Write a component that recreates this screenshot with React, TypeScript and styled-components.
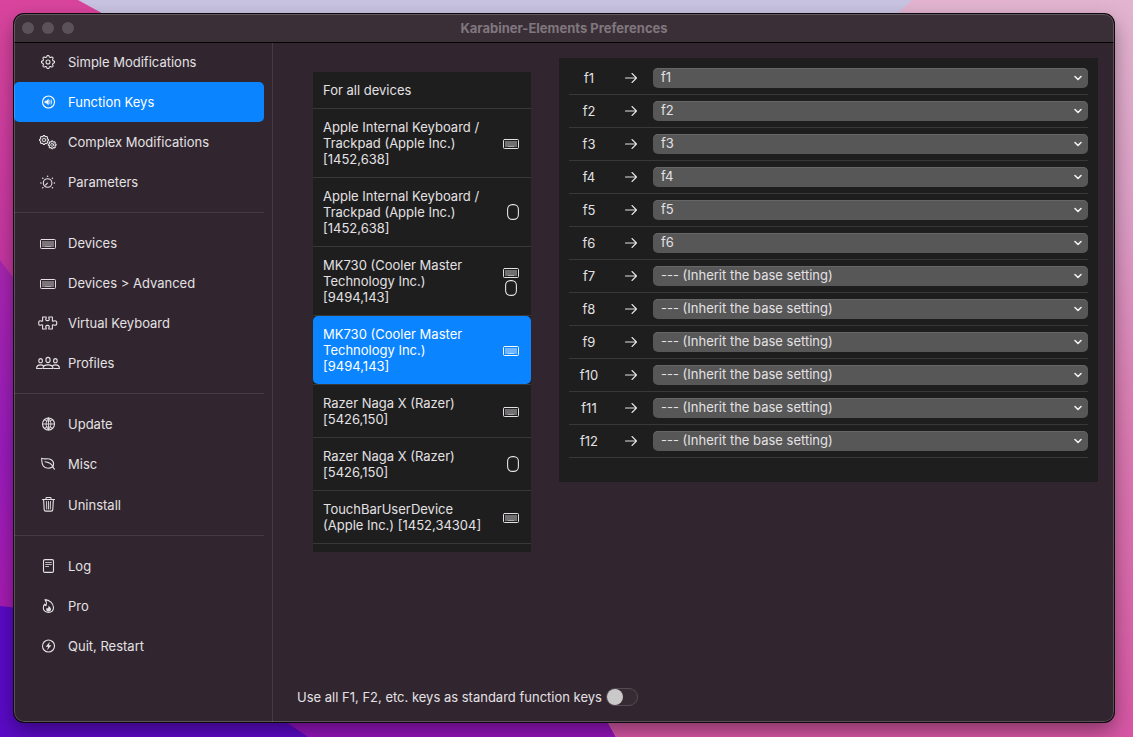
import React, { useState } from "react";
import styled, { createGlobalStyle, css } from "styled-components";

const GlobalStyle = createGlobalStyle`
  *, *::before, *::after { box-sizing: border-box; }
  body {
    margin: 0;
    background: #4a08b0;
    color: #e4e1e4;
    font-family: Inter, "Liberation Sans", sans-serif;
    font-size: 13px;
    line-height: 16px;
  }
  button, select, input { font: inherit; color: inherit; margin: 0; }
`;

/* ---------- layout ---------- */

const Desktop = styled.div`
  position: relative;
  display: flex;
  min-height: 100vh;
  padding: 14px 19px 15px 14px;
`;

const WallpaperSvg = styled.svg`
  position: absolute;
  inset: 0;
  width: 100%;
  height: 100%;
`;

const Window = styled.div`
  position: relative;
  flex: 1;
  display: flex;
  flex-direction: column;
  border-radius: 10px;
  background: #31262f;
  box-shadow: 0 0 0 1px #0d080c, 0 8px 20px rgba(0, 0, 0, 0.4);
  overflow: hidden;

  &::after {
    content: "";
    position: absolute;
    inset: 0;
    border: 1px solid rgba(255, 255, 255, 0.2);
    border-radius: inherit;
    pointer-events: none;
  }
`;

const TitleBar = styled.header`
  position: relative;
  display: grid;
  grid-template-columns: 1fr auto 1fr;
  align-items: center;
  height: 28px;
  padding: 0 8px;
  background: #3a2f37;
  box-shadow: 0 1px 0 #000;
`;

const Lights = styled.div`
  display: flex;
  gap: 8px;
`;

const Light = styled.button`
  width: 12px;
  height: 12px;
  padding: 0;
  border: 0;
  border-radius: 50%;
  background: #5b5159;
`;

const Title = styled.h1`
  margin: 0;
  font-size: 13px;
  line-height: 16px;
  font-weight: 700;
  color: #80777e;
`;

const Body = styled.div`
  flex: 1;
  display: flex;
`;

const Sidebar = styled.nav`
  flex: none;
  width: 259px;
  padding-right: 8px;
  border-right: 1px solid #453b43;
`;

const NavGroup = styled.div`
  & + & {
    margin-top: 10px;
    padding-top: 10px;
    border-top: 1px solid #453b43;
  }
`;

const NavItem = styled.button<{ $active?: boolean }>`
  display: flex;
  align-items: center;
  gap: 8px;
  width: 100%;
  padding: 10px 22px;
  border: 0;
  border-radius: 5px;
  background: ${(p) => (p.$active ? "#0a84ff" : "transparent")};
  color: ${(p) => (p.$active ? "#fff" : "inherit")};
  line-height: 20px;
  text-align: left;
`;

const IconSlot = styled.span`
  display: flex;
  justify-content: center;
  width: 24px;
`;

const Main = styled.main`
  flex: 1;
  display: flex;
  flex-direction: column;
  justify-content: space-between;
  padding: 16px 16px 16px 24px;
`;

const Panels = styled.div`
  display: flex;
  align-items: flex-start;
  gap: 28px;
  padding-left: 16px;
`;

const DeviceList = styled.ul`
  flex: none;
  width: 218px;
  margin: 14px 0 0;
  padding: 0 0 8px;
  list-style: none;
  background: #1e1e1e;
`;

const DeviceItem = styled.li`
  border-bottom: 1px solid #383838;
`;

const DeviceButton = styled.button<{ $active?: boolean }>`
  display: flex;
  align-items: center;
  justify-content: space-between;
  width: 100%;
  padding: 10px 12px 10px 10px;
  border: 0;
  background: transparent;
  text-align: left;
  ${(p) =>
    p.$active &&
    css`
      border-radius: 5px;
      background: #0a84ff;
      color: #fff;
    `}
`;

const DeviceName = styled.span`
  width: 168px;
`;

const DeviceIcons = styled.span`
  display: flex;
  flex-direction: column;
  align-items: center;
  gap: 2px;
`;

const KeyPanel = styled.section`
  flex: 1;
  padding: 10px 10px 24px;
  background: #1e1e1e;
`;

const KeyRow = styled.div`
  display: grid;
  grid-template-columns: 40px 44px 1fr;
  align-items: center;
  justify-items: center;
  padding-bottom: 6px;
  border-bottom: 1px solid #383838;

  & + & {
    padding-top: 6px;
  }
`;

const SelectBox = styled.span`
  display: grid;
  grid-template-columns: 1fr 20px;
  align-items: center;
  justify-items: center;
  width: 100%;
`;

const Select = styled.select`
  grid-area: 1 / 1 / 2 / 3;
  width: 100%;
  height: 20px;
  padding: 0 20px 2px 8px;
  border: 0;
  border-radius: 5px;
  appearance: none;
  background: #575757;
  box-shadow: inset 0 1px 0 #666;
`;

const SelectArrow = styled.svg`
  grid-area: 1 / 2 / 2 / 3;
  z-index: 1;
  pointer-events: none;
`;

const ToggleRow = styled.label`
  display: flex;
  align-items: center;
  align-self: flex-start;
  gap: 4px;
`;

const Toggle = styled.input`
  appearance: none;
  display: flex;
  width: 32px;
  height: 18px;
  border: 1px solid #554b53;
  border-radius: 9px;
  background: #362b33;

  &::before {
    content: "";
    width: 16px;
    height: 16px;
    border-radius: 50%;
    background: #cbc8ca;
  }

  &:checked {
    justify-content: flex-end;
    background: #0a84ff;
  }
`;

/* ---------- drawings ---------- */

function gear(cx: number, cy: number, r: number, depth: number, teeth: number) {
  const points: string[] = [];
  for (let i = 0; i < teeth * 12; i++) {
    const a = (i / (teeth * 12)) * Math.PI * 2;
    const wave = Math.max(-1, Math.min(1, Math.cos(a * teeth) * 1.8));
    const d = r + wave * depth;
    points.push(`${(cx + d * Math.sin(a)).toFixed(2)} ${(cy - d * Math.cos(a)).toFixed(2)}`);
  }
  return `M${points.join("L")}Z`;
}

const Glyph = ({ w, h, children }: { w: number; h: number; children: React.ReactNode }) => (
  <svg
    width={w}
    height={h}
    viewBox={`0 0 ${w} ${h}`}
    fill="none"
    stroke="currentColor"
    strokeWidth="1.1"
    strokeLinecap="round"
    strokeLinejoin="round"
    aria-hidden="true"
  >
    {children}
  </svg>
);

const GearIcon = () => (
  <Glyph w={14} h={14}>
    <path d={gear(7, 7, 5.8, 0.7, 8)} />
    <circle cx="7" cy="7" r="2" />
  </Glyph>
);

const SpeakerIcon = () => (
  <Glyph w={14} h={14}>
    <circle cx="7.5" cy="7" r="6" />
    <path d="M4.2 6h1.2l2-1.8v5.6l-2-1.8H4.2z" fill="currentColor" strokeWidth="0.5" />
    <path d="M8.8 5.6q.8 1.4 0 2.8M10.2 4.8q1.3 2.2 0 4.4" strokeWidth="0.8" />
  </Glyph>
);

const GearsIcon = () => (
  <Glyph w={18} h={16}>
    <path d={gear(5, 6, 4.1, 0.4, 8)} />
    <circle cx="5" cy="6" r="1.8" strokeWidth="0.9" />
    <circle cx="5" cy="6" r="0.5" fill="currentColor" stroke="none" />
    <path d={gear(13.2, 10.8, 3.5, 0.4, 8)} />
    <circle cx="13.2" cy="10.8" r="1.5" strokeWidth="0.9" />
    <circle cx="13.2" cy="10.8" r="0.5" fill="currentColor" stroke="none" />
  </Glyph>
);

const DialIcon = () => (
  <Glyph w={16} h={14}>
    <circle cx="7.6" cy="8" r="4.3" />
    <path d="M7.4 8.2L5.6 10" />
    <g fill="currentColor" stroke="none">
      <circle cx="7.6" cy="1.2" r="0.8" />
      <circle cx="2.8" cy="3.2" r="0.8" />
      <circle cx="12.4" cy="3.2" r="0.8" />
      <circle cx="0.9" cy="8" r="0.8" />
      <circle cx="14.4" cy="8" r="0.8" />
      <circle cx="2.8" cy="12.8" r="0.8" />
      <circle cx="12.4" cy="12.8" r="0.8" />
    </g>
  </Glyph>
);

const KeyboardIcon = () => (
  <Glyph w={16} h={12}>
    <rect x="0.5" y="2.5" width="15" height="9" rx="1" strokeWidth="1" />
    <rect x="2" y="4" width="12" height="6" fill="currentColor" stroke="none" opacity="0.42" />
    <path d="M5 9.5h6" strokeWidth="1" strokeLinecap="butt" opacity="0.5" />
  </Glyph>
);

const MouseIcon = () => (
  <Glyph w={12} h={16}>
    <rect x="0.6" y="0.6" width="10.8" height="14.8" rx="4.6" />
  </Glyph>
);

const PuzzleIcon = () => (
  <Glyph w={20} h={14}>
    <path d="M4.6 1H8.2V2.2C7.2 3 7.6 4.6 9.5 4.6S11.8 3 10.8 2.2V1H14.4V4.9C15.6 5.6 15.9 4.7 17 4.7C18.2 4.7 18.8 5.7 18.8 7S18.2 9.3 17 9.3C15.9 9.3 15.6 8.4 14.4 9.1V13H10.8V11.8C11.8 11 11.4 9.4 9.5 9.4S7.2 11 8.2 11.8V13H4.6V9.1C3.4 8.4 3.1 9.3 2 9.3C1 9.3 .7 8.3 .7 7S1 4.7 2 4.7C3.1 4.7 3.4 5.6 4.6 4.9Z" />
  </Glyph>
);

const PeopleIcon = () => (
  <Glyph w={24} h={14}>
    <ellipse cx="12" cy="4" rx="2.1" ry="2.6" />
    <ellipse cx="4.6" cy="4.7" rx="1.8" ry="2.1" />
    <ellipse cx="19.4" cy="4.7" rx="1.8" ry="2.1" />
    <path d="M7 12.5C7 10.2 9.2 8.9 12 8.9S17 10.2 17 12.5Z" />
    <path d="M6 12.5H.6C.6 10.2 2.2 8.9 4.6 8.9Q6.4 8.9 7.4 9.7M18 12.5H23.4C23.4 10.2 21.8 8.9 19.4 8.9Q17.6 8.9 16.6 9.7" />
  </Glyph>
);

const GlobeIcon = () => (
  <Glyph w={14} h={14}>
    <circle cx="7.5" cy="7" r="6" />
    <path
      d="M7.5 1v12M1.5 7h12M7.5 1C4.2 4 4.2 10 7.5 13M7.5 1C10.8 4 10.8 10 7.5 13M3.4 2.8Q7.5 5.6 11.6 2.8M3.4 11.2Q7.5 8.4 11.6 11.2"
      strokeWidth="0.9"
    />
  </Glyph>
);

const LeafIcon = () => (
  <Glyph w={14} h={14}>
    <path d="M.6 1.2C2.6 2.9 6.8.8 9.8 2.4C12.8 4 13 7 11.9 9.8C8 12 4.2 11.2 2.2 8.8C.5 6.6.9 3.4.6 1.2Z" />
    <path d="M4 4.8C7 5.5 9.5 5.6 11.3 8.5Q12 10.6 13.4 12.2" />
  </Glyph>
);

const TrashIcon = () => (
  <Glyph w={14} h={21}>
    <path d="M1.5 5.5h12M5 5.3V4.3Q5 3.5 5.8 3.5h3.4q.8 0 .8.8v1M2.6 5.6l.6 10q.1 1.5 1.5 1.5h5.6q1.4 0 1.5-1.5l.6-10" />
    <path d="M5.5 7.5l.2 7.5M7.5 7.5v7.5M9.5 7.5l-.2 7.5" strokeWidth="0.9" />
  </Glyph>
);

const DocIcon = () => (
  <Glyph w={14} h={14}>
    <rect x="2.5" y="0.6" width="10" height="12.8" rx="1.4" />
    <path d="M4.6 3.5h5.8M4.6 5.5h5.8M4.6 7.5h3" strokeWidth="0.8" />
  </Glyph>
);

const FlameIcon = () => (
  <Glyph w={14} h={14}>
    <path d="M4 .6C8.5.8 12.5 4.5 12.5 8.6C12.5 11.6 10.3 13.4 7.5 13.4S2.3 11.5 2.3 8.9C2.3 7.2 2.9 6 3.7 5.2C4 6 4.4 6.5 5 6.7C5.7 4.5 5.4 2.2 4 .6Z" />
    <path
      d="M7.8 6.5C8.2 7.8 10 8.5 10 10.2C10 11.6 9 12.4 7.6 12.4S5.2 11.6 5.2 10.4C5.2 9.7 5.5 9.2 5.9 8.8Q6.2 9.4 6.8 9.4C7.6 8.6 7.3 7.5 7.8 6.5Z"
      fill="currentColor"
      stroke="none"
    />
  </Glyph>
);

const BoltIcon = () => (
  <Glyph w={14} h={14}>
    <circle cx="7.5" cy="7" r="6" />
    <path d="M8.9 2.8L4.6 7.7h2.5L6.1 11.2l4.3-4.9H7.9z" fill="currentColor" stroke="none" />
  </Glyph>
);

const ArrowIcon = () => (
  <Glyph w={14} h={12}>
    <path d="M1.5 6h11M8 1.5L12.5 6 8 10.5" />
  </Glyph>
);

const Wallpaper = () => (
  <WallpaperSvg viewBox="0 0 1133 737" preserveAspectRatio="none" aria-hidden="true">
    <defs>
      <linearGradient id="magenta" x1="0" y1="0" x2="0" y2="1">
        <stop offset="0" stopColor="#d9459d" />
        <stop offset="1" stopColor="#c032a4" />
      </linearGradient>
      <linearGradient id="violet" x1="0" y1="0" x2="0" y2="1">
        <stop offset="0" stopColor="#a826b0" />
        <stop offset="0.5" stopColor="#9a1cbc" />
        <stop offset="1" stopColor="#a81cae" />
      </linearGradient>
      <linearGradient id="rose" x1="0" y1="0" x2="0" y2="1">
        <stop offset="0" stopColor="#e2b4d0" />
        <stop offset="0.3" stopColor="#dc9cc4" />
        <stop offset="0.6" stopColor="#da78b0" />
        <stop offset="1" stopColor="#d656a4" />
      </linearGradient>
    </defs>
    <rect width="1133" height="737" fill="#c8c3e0" />
    <path d="M0 0H78L160 45V340H0Z" fill="url(#magenta)" />
    <path d="M0 260L60 340V640H0Z" fill="url(#violet)" />
    <path d="M0 606Q160 620 310 737H0Z" fill="#5a0ac6" />
    <path d="M240 690L308 737H616L590 690Z" fill="#9414bc" />
    <path d="M912 0H1133V737H616L590 690L860 50Z" fill="url(#rose)" />
  </WallpaperSvg>
);

/* ---------- data ---------- */

const navGroups = [
  [
    { label: "Simple Modifications", Icon: GearIcon },
    { label: "Function Keys", Icon: SpeakerIcon },
    { label: "Complex Modifications", Icon: GearsIcon },
    { label: "Parameters", Icon: DialIcon },
  ],
  [
    { label: "Devices", Icon: KeyboardIcon },
    { label: "Devices > Advanced", Icon: KeyboardIcon },
    { label: "Virtual Keyboard", Icon: PuzzleIcon },
    { label: "Profiles", Icon: PeopleIcon },
  ],
  [
    { label: "Update", Icon: GlobeIcon },
    { label: "Misc", Icon: LeafIcon },
    { label: "Uninstall", Icon: TrashIcon },
  ],
  [
    { label: "Log", Icon: DocIcon },
    { label: "Pro", Icon: FlameIcon },
    { label: "Quit, Restart", Icon: BoltIcon },
  ],
];

const devices = [
  { name: "For all devices" },
  { name: "Apple Internal Keyboard / Trackpad (Apple Inc.) [1452,638]", keyboard: true },
  { name: "Apple Internal Keyboard / Trackpad (Apple Inc.) [1452,638]", mouse: true },
  { name: "MK730 (Cooler Master Technology Inc.) [9494,143]", keyboard: true, mouse: true },
  { name: "MK730 (Cooler Master Technology Inc.) [9494,143]", keyboard: true },
  { name: "Razer Naga X (Razer) [5426,150]", keyboard: true },
  { name: "Razer Naga X (Razer) [5426,150]", mouse: true },
  { name: "TouchBarUserDevice (Apple Inc.) [1452,34304]", keyboard: true },
];

const inherit = "--- (Inherit the base setting)";
const keys = Array.from({ length: 12 }, (_, i) => `f${i + 1}`);

export default function App() {
  const [page, setPage] = useState("Function Keys");
  const [device, setDevice] = useState(4);

  return (
    <>
      <GlobalStyle />
      <Desktop>
        <Wallpaper />
        <Window>
          <TitleBar>
            <Lights>
              <Light aria-label="Close" />
              <Light aria-label="Minimize" />
              <Light aria-label="Zoom" />
            </Lights>
            <Title>Karabiner-Elements Preferences</Title>
          </TitleBar>
          <Body>
            <Sidebar>
              {navGroups.map((group) => (
                <NavGroup key={group[0].label}>
                  {group.map(({ label, Icon }) => (
                    <NavItem key={label} $active={label === page} onClick={() => setPage(label)}>
                      <IconSlot>
                        <Icon />
                      </IconSlot>
                      {label}
                    </NavItem>
                  ))}
                </NavGroup>
              ))}
            </Sidebar>
            <Main>
              <Panels>
                <DeviceList>
                  {devices.map((d, i) => (
                    <DeviceItem key={i}>
                      <DeviceButton $active={i === device} onClick={() => setDevice(i)}>
                        <DeviceName>{d.name}</DeviceName>
                        <DeviceIcons>
                          {d.keyboard && <KeyboardIcon />}
                          {d.mouse && <MouseIcon />}
                        </DeviceIcons>
                      </DeviceButton>
                    </DeviceItem>
                  ))}
                </DeviceList>
                <KeyPanel>
                  {keys.map((key, i) => (
                    <KeyRow key={key}>
                      <label htmlFor={key}>{key}</label>
                      <ArrowIcon />
                      <SelectBox>
                        <Select id={key} defaultValue={i < 6 ? key : inherit}>
                          <option>{inherit}</option>
                          {keys.map((k) => (
                            <option key={k}>{k}</option>
                          ))}
                        </Select>
                        <SelectArrow
                          width="8"
                          height="6"
                          viewBox="0 0 8 6"
                          fill="none"
                          stroke="#f0f0f0"
                          strokeWidth="1.6"
                          strokeLinecap="round"
                          strokeLinejoin="round"
                          aria-hidden="true"
                        >
                          <path d="M1 1.5L4 4.5 7 1.5" />
                        </SelectArrow>
                      </SelectBox>
                    </KeyRow>
                  ))}
                </KeyPanel>
              </Panels>
              <ToggleRow>
                Use all F1, F2, etc. keys as standard function keys
                <Toggle type="checkbox" />
              </ToggleRow>
            </Main>
          </Body>
        </Window>
      </Desktop>
    </>
  );
}
